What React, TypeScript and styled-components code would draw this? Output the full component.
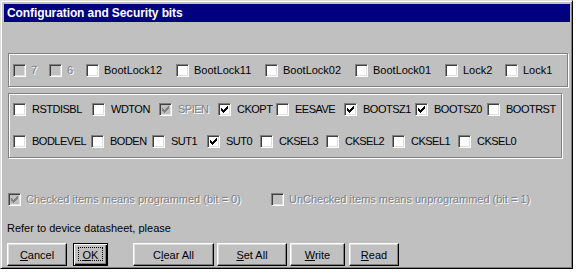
import React from "react";
import styled, { createGlobalStyle } from "styled-components";

type Item = {
  label: string;
  w?: number;
  checked?: boolean;
  disabled?: boolean;
  tight?: boolean;
};

const GlobalStyle = createGlobalStyle`
  body {
    margin: 0;
    background: #fff;
    font-family: "Liberation Sans", Arial, sans-serif;
    font-size: 11px;
    color: #000;
  }
`;

const Window = styled.div`
  width: 573px;
  height: 269px;
  box-sizing: border-box;
  background: #c0c0c0;
  border: 1px solid;
  border-color: #dfdfdf #000 #000 #dfdfdf;
  box-shadow: inset 1px 1px #fff, inset -1px -1px #808080;
  padding: 3px 2px 2px 3px;
  display: flex;
  flex-direction: column;
`;

const TitleBar = styled.div`
  height: 18px;
  background: #000080;
  color: #fff;
  font-weight: bold;
  font-size: 12px;
  display: flex;
  align-items: center;
  padding-left: 3px;
  letter-spacing: -0.1px;
`;

const Content = styled.div`
  padding-left: 4px;
  display: flex;
  flex-direction: column;
`;

const GroupBox = styled.div<{ $w: number; $h: number; $mt: number }>`
  width: ${(p) => p.$w}px;
  height: ${(p) => p.$h}px;
  margin-top: ${(p) => p.$mt}px;
  box-sizing: border-box;
  border: 1px solid #808080;
  box-shadow: 1px 1px 0 #fff, inset 1px 1px 0 #fff;
  display: flex;
  flex-direction: column;
  justify-content: center;
`;

const Row = styled.div<{ $h: number }>`
  height: ${(p) => p.$h}px;
  display: flex;
  align-items: center;
  padding-left: 4px;
`;

const Option = styled.div<{ $w?: number }>`
  flex: none;
  width: ${(p) => (p.$w ? `${p.$w}px` : "auto")};
  display: flex;
  align-items: center;
  white-space: nowrap;
`;

const Box = styled.span<{ $disabled?: boolean }>`
  flex: none;
  width: 13px;
  height: 13px;
  box-sizing: border-box;
  border: 1px solid;
  border-color: #808080 #fff #fff #808080;
  box-shadow: inset 1px 1px #404040, inset -1px -1px #dfdfdf;
  background: ${(p) => (p.$disabled ? "#c0c0c0" : "#fff")};
  display: flex;
  align-items: center;
  justify-content: center;
`;

const Label = styled.span<{ $disabled?: boolean; $tight?: boolean }>`
  margin-left: ${(p) => (p.$tight ? 6 : 5)}px;
  line-height: 13px;
  letter-spacing: ${(p) => (p.$tight ? "-0.5px" : "0")};
  color: ${(p) => (p.$disabled ? "#808080" : "#000")};
  text-shadow: ${(p) => (p.$disabled ? "1px 1px 0 #fff" : "none")};
`;

const LegendRow = styled.div`
  display: flex;
  align-items: center;
  height: 13px;
  margin-top: 35px;
  padding-left: 4px;
`;

const Note = styled.div`
  margin-top: 16px;
  line-height: 13px;
  padding-left: 3px;
`;

const ButtonBar = styled.div`
  display: flex;
  margin-top: 8px;
  padding-left: 3px;
`;

const Button = styled.button<{ $w: number; $ml?: number; $default?: boolean }>`
  position: relative;
  width: ${(p) => p.$w}px;
  height: 23px;
  margin-left: ${(p) => p.$ml ?? 0}px;
  padding: 0;
  font-family: inherit;
  font-size: 11px;
  color: #000;
  background: #c0c0c0;
  border: 1px solid;
  border-color: ${(p) => (p.$default ? "#000" : "#fff #000 #000 #fff")};
  box-shadow: ${(p) =>
    p.$default
      ? "inset 1px 1px #fff, inset -1px -1px #000, inset -2px -2px #808080"
      : "inset -1px -1px #808080, inset 1px 1px #dfdfdf"};

  ${(p) =>
    p.$default &&
    `
    &::after {
      content: "";
      position: absolute;
      inset: 3px 4px 4px 4px;
      border: 1px dotted #000;
    }
  `}
`;

const Check = ({ color }: { color: string }) => (
  <svg width="7" height="7" viewBox="0 0 7 7" shapeRendering="crispEdges">
    <polygon points="0,2 2,4 7,0 7,3 2,7 0,5" fill={color} />
  </svg>
);

const CheckOption = ({ label, w, checked, disabled, tight }: Item) => (
  <Option $w={w}>
    <Box $disabled={disabled}>
      {checked && <Check color={disabled ? "#808080" : "#000"} />}
    </Box>
    <Label $disabled={disabled} $tight={tight}>
      {label}
    </Label>
  </Option>
);

const lockBits: Item[] = [
  { label: "7", w: 36, disabled: true },
  { label: "6", w: 37, disabled: true },
  { label: "BootLock12", w: 90 },
  { label: "BootLock11", w: 89 },
  { label: "BootLock02", w: 90 },
  { label: "BootLock01", w: 90 },
  { label: "Lock2", w: 60 },
  { label: "Lock1" },
];

const fuseHigh: Item[] = [
  { label: "RSTDISBL", w: 79 },
  { label: "WDTON", w: 67 },
  { label: "SPIEN", w: 59, checked: true, disabled: true },
  { label: "CKOPT", w: 58, checked: true },
  { label: "EESAVE", w: 68 },
  { label: "BOOTSZ1", w: 71, checked: true },
  { label: "BOOTSZ0", w: 72, checked: true },
  { label: "BOOTRST" },
];

const fuseLow: Item[] = [
  { label: "BODLEVEL", w: 78 },
  { label: "BODEN", w: 61 },
  { label: "SUT1", w: 55 },
  { label: "SUT0", w: 53, checked: true },
  { label: "CKSEL3", w: 66 },
  { label: "CKSEL2", w: 66 },
  { label: "CKSEL1", w: 66 },
  { label: "CKSEL0" },
];

export default function App() {
  return (
    <>
      <GlobalStyle />
      <Window>
        <TitleBar>Configuration and Security bits</TitleBar>
        <Content>
          <GroupBox $w={560} $h={34} $mt={31}>
            <Row $h={32}>
              {lockBits.map((b) => (
                <CheckOption key={b.label} {...b} />
              ))}
            </Row>
          </GroupBox>

          <GroupBox $w={554} $h={65} $mt={6}>
            <Row $h={31}>
              {fuseHigh.map((b) => (
                <CheckOption key={b.label} {...b} tight />
              ))}
            </Row>
            <Row $h={32}>
              {fuseLow.map((b) => (
                <CheckOption key={b.label} {...b} tight />
              ))}
            </Row>
          </GroupBox>
        </Content>

        <LegendRow>
          <CheckOption
            label="Checked items means programmed (bit = 0)"
            w={263}
            checked
            disabled
          />
          <CheckOption
            label="UnChecked items means unprogrammed (bit = 1)"
            disabled
          />
        </LegendRow>

        <Note>Refer to device datasheet, please</Note>

        <ButtonBar>
          <Button $w={60}>
            <u>C</u>ancel
          </Button>
          <Button $w={35} $ml={6} $default>
            <u>O</u>K
          </Button>
          <Button $w={81} $ml={25}>
            C<u>l</u>ear All
          </Button>
          <Button $w={70} $ml={3}>
            <u>S</u>et All
          </Button>
          <Button $w={55} $ml={3}>
            <u>W</u>rite
          </Button>
          <Button $w={50} $ml={4}>
            <u>R</u>ead
          </Button>
        </ButtonBar>
      </Window>
    </>
  );
}
